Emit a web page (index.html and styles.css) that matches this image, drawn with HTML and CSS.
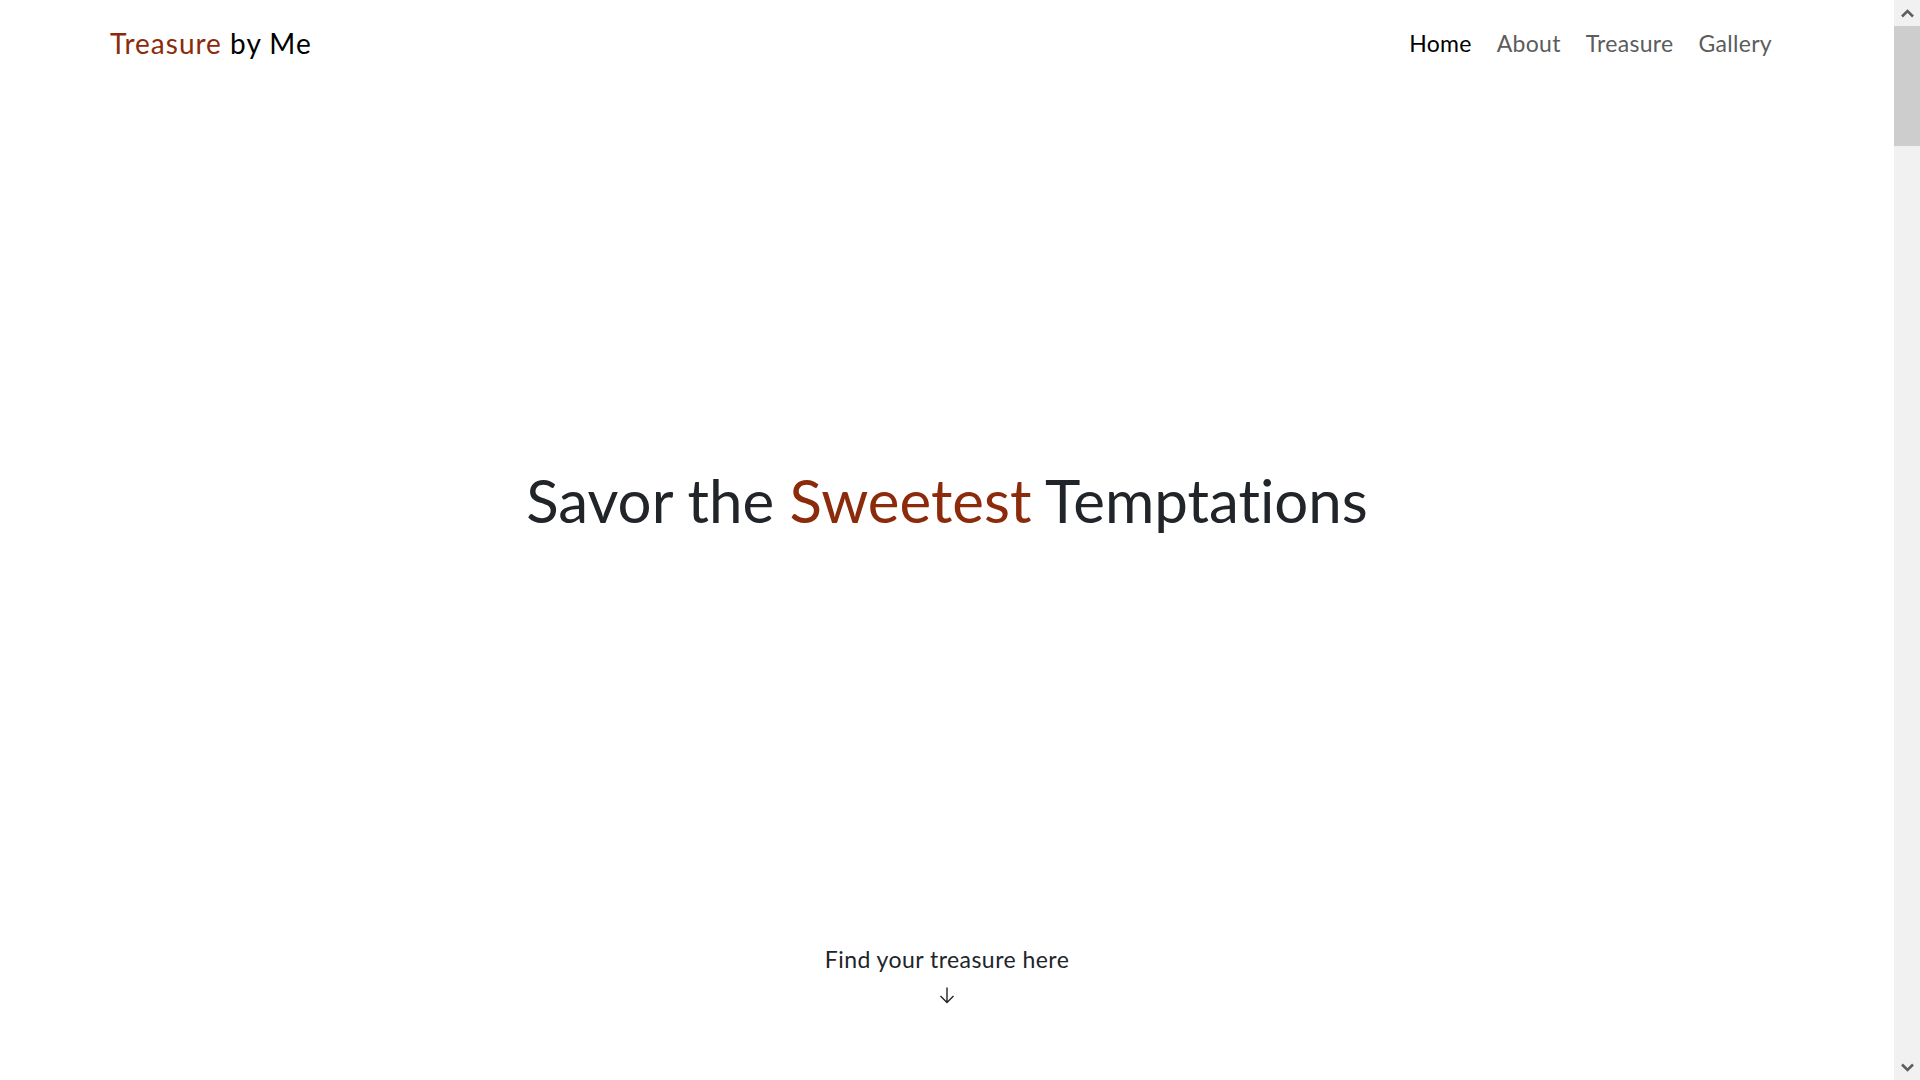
FILE: index.html
```html
<!DOCTYPE html>
<html lang="en">
<head>
<meta charset="utf-8">
<title>Treasure by Me</title>
<link rel="stylesheet" href="styles.css">
</head>
<body>
<div class="page">
  <div class="screen">
    <header class="navbar">
      <a class="brand" href="#"><span class="accent">Treasure</span> by Me</a>
      <nav class="nav">
        <a class="nav-link active" href="#">Home</a>
        <a class="nav-link" href="#">About</a>
        <a class="nav-link" href="#">Treasure</a>
        <a class="nav-link" href="#">Gallery</a>
      </nav>
    </header>
    <main class="hero">
      <h1 class="hero-title">Savor the <span class="accent">Sweetest</span> Temptations</h1>
    </main>
    <div class="cta">
      <span class="cta-text">Find your treasure here</span>
      <svg class="cta-arrow" width="16" height="17" viewBox="0 0 16 17" aria-hidden="true">
        <path d="M8 0.5 V15.5 M1.5 9 L8 15.5 L14.5 9" fill="none" stroke="#212529" stroke-width="1.4"/>
      </svg>
    </div>
  </div>
</div>
<aside class="scrollbar" aria-hidden="true">
  <div class="sb-btn">
    <svg width="13" height="9" viewBox="0 0 13 9"><path d="M1 7.5 L6.5 2 L12 7.5" fill="none" stroke="#5f5f5f" stroke-width="2.6"/></svg>
  </div>
  <div class="sb-thumb"></div>
  <div class="sb-track"></div>
  <div class="sb-btn">
    <svg width="13" height="9" viewBox="0 0 13 9"><path d="M1 1.5 L6.5 7 L12 1.5" fill="none" stroke="#5f5f5f" stroke-width="2.6"/></svg>
  </div>
</aside>
</body>
</html>
```
FILE: styles.css
```css
html, body {
  margin: 0;
  height: 100%;
  background: #fff;
}
body {
  display: flex;
  overflow: hidden;
  font-family: "Lato", "Open Sans", sans-serif;
  font-variant-ligatures: none;
  color: #212529;
}
.page {
  flex: 1;
  min-width: 0;
}
.scrollbar {
  width: 26px;
  flex: none;
  display: flex;
  flex-direction: column;
  background: #f1f1f1;
}
.sb-btn {
  height: 26px;
  display: flex;
  align-items: center;
  justify-content: center;
}
.sb-thumb {
  height: 120px;
  background: #cdcdcd;
}
.sb-track {
  flex: 1;
}
a {
  text-decoration: none;
}
.accent {
  color: #8b2b0b;
}
.screen {
  height: 100vh;
  display: flex;
  flex-direction: column;
}
.navbar {
  display: flex;
  align-items: center;
  justify-content: space-between;
  height: 86px;
  padding: 0 110px;
}
.brand {
  font-size: 28px;
  color: #000;
  letter-spacing: 1px;
}
.nav {
  display: flex;
}
.nav-link {
  font-size: 23px;
  color: #5c5c5c;
  padding: 0 12.5px;
  letter-spacing: 0.3px;
}
.nav-link:last-child {
  padding-right: 12px;
}
.nav-link.active {
  color: #000;
}
.hero {
  flex: 1;
  display: flex;
  align-items: center;
  justify-content: center;
  padding-top: 6px;
  padding-bottom: 34px;
}
.hero-title {
  margin: 0;
  font-weight: 400;
  font-size: 60px;
  line-height: 1.2;
}
.cta {
  display: flex;
  flex-direction: column;
  align-items: center;
  padding-bottom: 76px;
  font-size: 23px;
  letter-spacing: 0.45px;
}
.cta-text {
  line-height: 1.4;
}
.cta-arrow {
  display: block;
  margin-top: 12px;
}
```
